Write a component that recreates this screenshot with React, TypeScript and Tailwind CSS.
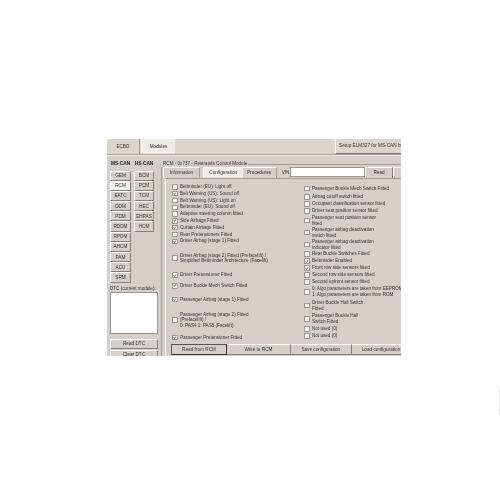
const font = { fontFamily: '"Liberation Sans", Arial, sans-serif' };

const col1 = ['GEM', 'RCM', 'EATC', 'DDM', 'PDM', 'RDDM', 'RPDM', 'AHCM', 'PAM', 'ACU', 'SRM'];
const col2 = ['BCM', 'PCM', 'TCM', 'HEC', 'EHPAS', 'HCM'];

type Row = { h: number; on?: boolean; text: string[] };

const leftRows: Row[] = [
  { h: 6.8, text: ['Beltminder (EU): Light off'] },
  { h: 6.8, on: true, text: ['Belt Warning (US): Sound off'] },
  { h: 6.8, text: ['Belt Warning (US): Light on'] },
  { h: 6.8, text: ['Beltminder (EU): Sound off'] },
  { h: 6.8, text: ['Adaptive steering column fitted'] },
  { h: 6.8, on: true, text: ['Side Airbags Fitted'] },
  { h: 6.8, on: true, text: ['Curtain Airbags Fitted'] },
  { h: 6.8, text: ['Rear Pretensioners Fitted'] },
  { h: 6.8, on: true, text: ['Driver Airbag (stage 1) Fitted'] },
  { h: 27, text: ['Driver Airbag (stage 2) Fitted (Prefacelift) /', 'Simplified Beltminder Architecture (Facelift)'] },
  { h: 7, on: true, text: ['Driver Pretensioner Fitted'] },
  { h: 14.4, on: true, text: ['Driver Buckle Mech Switch Fitted'] },
  { h: 12.8, on: true, text: ['Passenger Airbag (stage 1) Fitted'] },
  { h: 28.6, text: ['Passenger Airbag (stage 2) Fitted', '(Prefacelift) /', '0: PAS4   1: PAS5 (Facelift)'] },
  { h: 6, on: true, text: ['Passenger Pretensioner Fitted'] },
];

const rightRows: Row[] = [
  { h: 10, text: ['Passenger Buckle Mech Switch Fitted'] },
  { h: 7, text: ['Airbag cutoff switch fitted'] },
  { h: 7, text: ['Occupant classification sensor fitted'] },
  { h: 7, text: ['Driver seat position sensor fitted'] },
  { h: 12, text: ['Passenger seat position sensor', 'fitted'] },
  { h: 12, text: ['Passenger airbag deactivation', 'switch fitted'] },
  { h: 12, text: ['Passenger airbag deactivation', 'indicator fitted'] },
  { h: 7, text: ['Rear Buckle Switches Fitted'] },
  { h: 7, on: true, text: ['Beltminder Enabled'] },
  { h: 7, on: true, text: ['Front row side sensors fitted'] },
  { h: 7, text: ['Second row side sensors fitted'] },
  { h: 7, text: ['Second upfront sensor fitted'] },
  { h: 13, text: ['0: Algo parameters are taken from EEPROM', '1: Algo parameters are taken from ROM'] },
  { h: 14, text: ['Driver Buckle Hall Switch', 'Fitted'] },
  { h: 13, text: ['Passenger Buckle Hall', 'Switch Fitted'] },
  { h: 7, text: ['Not used (0)'] },
  { h: 7, text: ['Not used (0)'] },
];

function ModuleButton({ label, active }: { label: string; active?: boolean }) {
  return (
    <div
      className={`h-[10.2px] flex items-center justify-center text-[4.7px] text-[#333] border-t border-l border-white border-r border-b border-r-[#808080] border-b-[#808080] ${
        active ? 'bg-[#f2f0ea]' : 'bg-[#d4d0c8]'
      }`}
    >
      {label}
    </div>
  );
}

function Check({ row }: { row: Row }) {
  return (
    <div className="flex items-center gap-[2.5px] shrink-0" style={{ height: row.h }}>
      <div className="w-[5.5px] h-[5.5px] shrink-0 bg-white border border-[#9a9a9a] flex items-center justify-center">
        {row.on && (
          <svg viewBox="0 0 6 6" className="w-[5px] h-[5px]">
            <path d="M1 3 L2.4 4.6 L5 1.2" fill="none" stroke="#111" strokeWidth="1.1" />
          </svg>
        )}
      </div>
      <div className="text-[4.6px] leading-[5.6px] text-[#333] whitespace-nowrap">
        {row.text.map((line) => (
          <div key={line}>{line}</div>
        ))}
      </div>
    </div>
  );
}

export default function App() {
  return (
    <div className="relative w-[500px] h-[500px] bg-white pt-[139px] pl-[107px]" style={font}>
      <div className="w-[294px] h-[217px] overflow-hidden bg-[#d4d0c8] flex flex-col blur-[0.4px]">
        {/* top tabs */}
        <div className="h-[16px] shrink-0 flex bg-[#dcd6ca] border-b border-[#a09c94] text-[4.7px] text-[#333]">
          <div className="w-[33px] flex items-center justify-center border-r border-[#a09c94]">ECBD</div>
          <div className="w-[34px] ml-px flex items-center justify-center bg-[#ecebe4] border-l border-white">Modules</div>
          <div className="ml-auto w-[66px] pl-[3px] flex items-center border-l border-white border-b border-b-[#808080] whitespace-nowrap overflow-hidden">
            Setup ELM327 for MS-CAN bus
          </div>
        </div>

        <div className="flex flex-1 min-h-0 border-t border-[#f0eee8]">
          {/* module list */}
          <div className="w-[55px] shrink-0 pl-[3px] pr-[2px] pt-[3.5px]">
            <div className="flex gap-[3px] h-[11px] text-[4.8px] font-bold text-[#222]">
              <div className="w-[21px] text-center whitespace-nowrap">MS-CAN</div>
              <div className="w-[20px] text-center whitespace-nowrap">HS-CAN</div>
            </div>
            <div className="flex gap-[3px]">
              <div className="w-[21px]">
                {col1.map((m) => (
                  <ModuleButton key={m} label={m} active={m === 'RCM'} />
                ))}
              </div>
              <div className="w-[20px]">
                {col2.map((m) => (
                  <ModuleButton key={m} label={m} />
                ))}
              </div>
            </div>
            <div className="mt-[3px] text-[4.6px] leading-[6px] text-[#333] whitespace-nowrap">DTC (current module):</div>
            <div className="mt-[0.5px] h-[42px] w-[48px] bg-white border border-[#9a968e]" />
            <div className="mt-[5px] w-[48px] h-[9.5px] flex items-center justify-center text-[4.7px] text-[#333] border border-t-white border-l-white border-r-[#808080] border-b-[#808080]">
              Read DTC
            </div>
            <div className="mt-[1.5px] w-[48px] h-[9.5px] flex items-center justify-center text-[4.7px] text-[#333] border border-t-white border-l-white border-r-[#808080] border-b-[#808080]">
              Clear DTC
            </div>
          </div>

          {/* RCM group */}
          <div className="flex-1 min-w-0 pt-[5px]">
            <div className="h-[6px] flex items-center pl-[1px] text-[4.6px] text-[#333] whitespace-nowrap">
              <span className="pr-[1px]">RCM - 0x737 - Restraints Control Module</span>
              <div className="flex-1 border-t border-[#a09c94]" />
            </div>
            <div className="ml-[-1px] border-l border-[#a09c94] pl-[1px] h-[189px] flex flex-col">
              <div className="h-[11px] shrink-0 flex text-[4.7px] text-[#333]">
                <div className="w-[37px] flex items-center justify-center border-t border-l border-white border-r border-r-[#a09c94]">Information</div>
                <div className="w-[40px] ml-[3px] flex items-center justify-center bg-[#ecebe4] border-t border-l border-white">Configuration</div>
                <div className="w-[34px] flex items-center justify-center border-t border-white border-r border-r-[#a09c94]">Procedures</div>
                <div className="w-[14px] flex items-center justify-end pr-[1px]">VIN</div>
                <div className="w-[75px] h-[10px] bg-white border border-[#9a968e]" />
                <div className="w-[28px] flex items-center justify-center border-t border-l border-white border-r border-r-[#808080]">Read</div>
                <div className="w-[8px] border-t border-l border-white" />
              </div>
              <div className="flex-1 min-h-0 border-t border-[#a09c94] ml-[2px] border-l border-l-white pt-[1px] pl-[6px] flex flex-col">
                <div className="flex shrink-0 h-[164px]">
                  <div className="w-[132px] shrink-0 pt-[3.5px]">
                    {leftRows.map((r, i) => (
                      <Check key={i} row={r} />
                    ))}
                  </div>
                  <div className="pt-[3.5px]">
                    {rightRows.map((r, i) => (
                      <Check key={i} row={r} />
                    ))}
                  </div>
                </div>
                <div className="flex h-[11px] ml-[-1px] shrink-0 text-[4.7px] text-[#333] whitespace-nowrap">
                  <div className="w-[57px] flex items-center justify-center border border-[#555] border-r-[#333] border-b-[#333]">Read from RCM</div>
                  <div className="w-[65px] flex items-center justify-center border-t border-white border-r border-r-[#808080] border-b border-b-[#808080]">Write to RCM</div>
                  <div className="w-[62px] flex items-center justify-center border-t border-white border-r border-r-[#808080] border-b border-b-[#808080]">Save configuration</div>
                  <div className="w-[50px] flex items-center pl-[10px] overflow-hidden border-t border-white border-b border-b-[#808080]">Load configuration</div>
                </div>
              </div>
            </div>
          </div>
        </div>
      </div>
      <div className="absolute right-0 top-[390px] w-[1px] h-[25px] bg-[#e4e4e4]" />
    </div>
  );
}
